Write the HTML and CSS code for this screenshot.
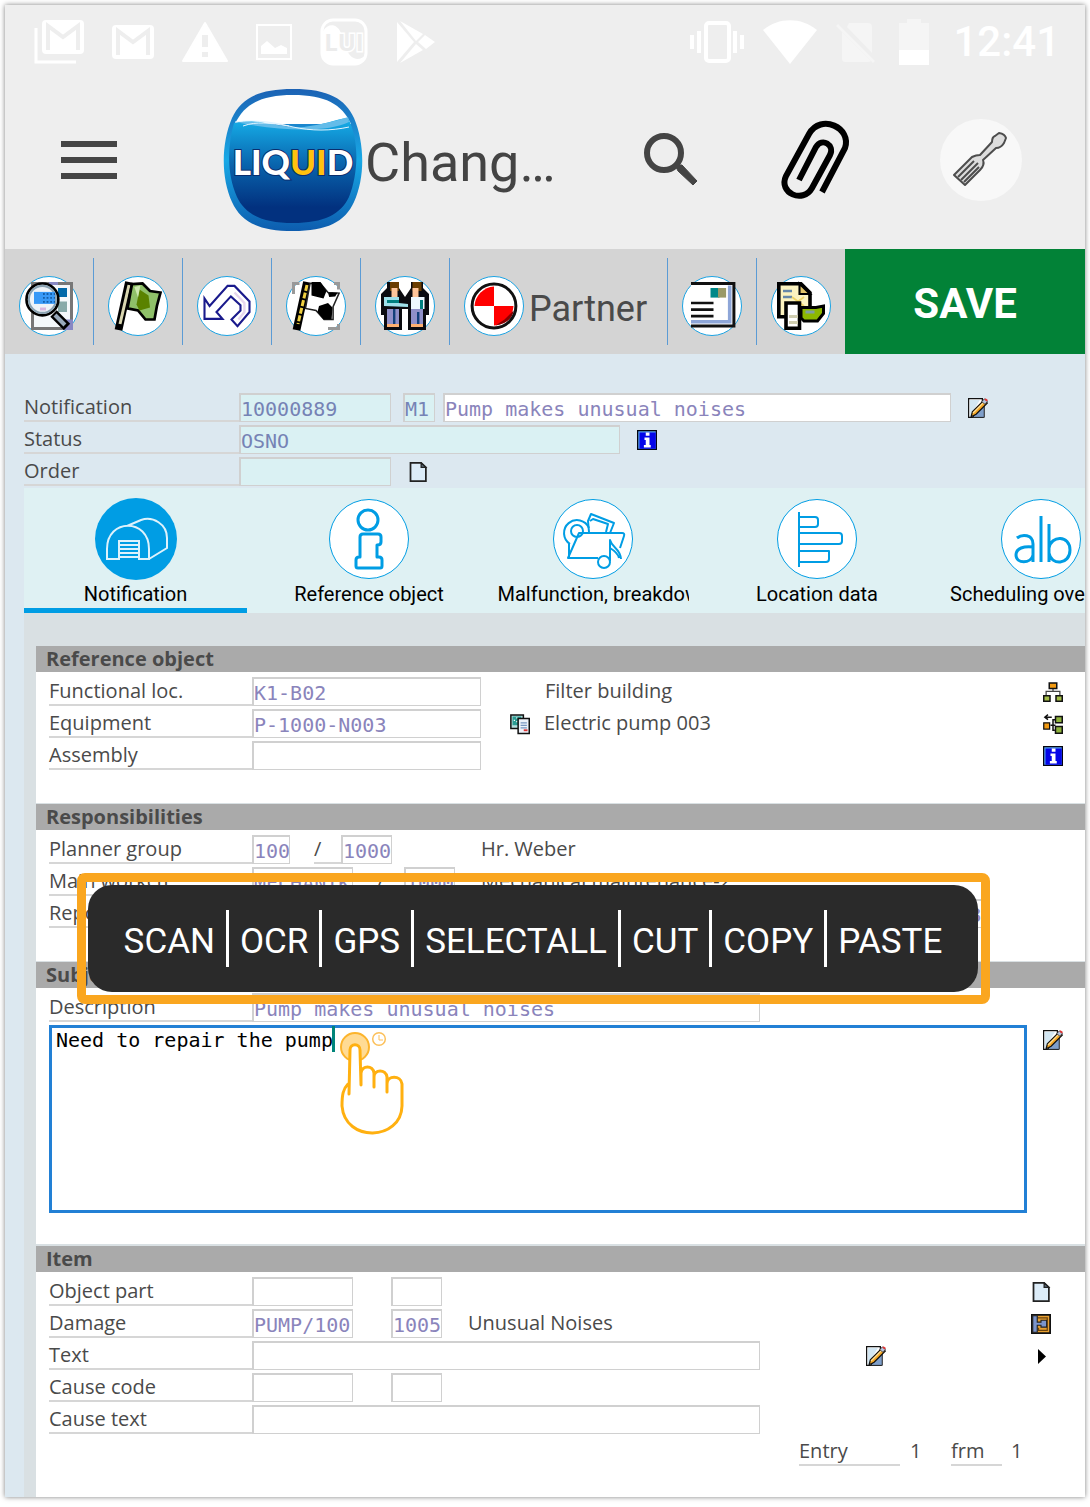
FILE: index.html
```html
<!DOCTYPE html>
<html lang="en">
<head>
<meta charset="utf-8">
<meta name="viewport" content="width=device-width, initial-scale=1">
<title>Change notification</title>
<link rel="stylesheet" href="styles.css">
</head>
<body>
<svg class="sprite" width="0" height="0" aria-hidden="true">
  <symbol id="i-edit" viewBox="0 0 16 16">
    <path d="M.5 .5h11v15h-11z" fill="#fff" stroke="#111"/>
    <path d="M1.500 1.500h8L5 9v5.500H1.500z" fill="#d3e7f3"/>
    <path d="M8 8l5-3v10.500H4z" fill="#7f9fca" stroke="#222" stroke-width=".8"/>
    <path d="M2.500 15l1-4 9-9 3 2-9 9z" fill="#f5a623" stroke="#111"/>
    <path d="M4 12l8.500-8.500" stroke="#ffe19a"/>
    <path d="M11 3l2-2.300 2.600 1.800L13.600 5z" fill="#b8c4de" stroke="#333" stroke-width=".6"/>
    <path d="M13.500.7l2 1.500" stroke="#d33" stroke-width="1.500"/>
  </symbol>
  <symbol id="i-info" viewBox="0 0 16 16">
    <path d="M0 0h16v16H0z" fill="#050510"/><path d="M1 1h14v14H1z" fill="#55a0f0"/><path d="M2 2h13v13H2z" fill="#0505e8"/>
    <path d="M7 2h3v2.500H7zM6 6h4v6h1v2H5.500v-2H7V8H6z" fill="#fff"/>
  </symbol>
  <symbol id="i-page" viewBox="0 0 16 16">
    <path d="M2 .7h8.500l3.800 3.600v11H2z" fill="#dcecf8" stroke="#222" stroke-width="1.400"/>
    <path d="M10.500 .7v3.600h3.800z" fill="#567" stroke="#222"/>
  </symbol>
</svg>

<div class="screen">
  <header class="top">
    <div class="status">
      <svg width="50" height="44" viewBox="0 0 50 44"><path d="M2 8v34h40" fill="none" stroke="#fff" stroke-width="3"/><rect x="8" width="42" height="34" rx="4" fill="#fff"/><path d="M14 30V6l15 11L44 6v24" fill="none" stroke="#eee" stroke-width="4"/></svg>
      <svg width="42" height="34" viewBox="0 0 42 34"><rect width="42" height="34" rx="4" fill="#fff"/><path d="M6 30V6l15 11L36 6v24" fill="none" stroke="#eee" stroke-width="4"/></svg>
      <svg width="46" height="42" viewBox="0 0 46 42"><path d="M23 2L1 40h44z" fill="#fff" stroke="#fff" stroke-width="2" stroke-linejoin="round"/><path d="M20 14h6v12h-6zM20 31h6v5h-6z" fill="#eee"/></svg>
      <svg width="36" height="36" viewBox="0 0 36 36"><path d="M1 1h34v34H1z" fill="none" stroke="#fff" stroke-width="2"/><path d="M5 30v-8l6-5 8 7 6-3 6 3v6z" fill="#fff"/></svg>
      <svg width="48" height="48" viewBox="0 0 48 48"><rect x="2" y="2" width="44" height="44" rx="11" fill="none" stroke="#fff" stroke-width="3"/><path d="M3 13c5-8 14-8 18 2 5 12 5 24 16 26 4 0 7-2 8-4v4c-2 4-5 5-8 5H12c-6 0-9-4-9-9z" fill="#fff"/><text x="24" y="33" text-anchor="middle" class="lui">LUI</text></svg>
      <svg width="40" height="44" viewBox="0 0 40 44"><path d="M1 2l17 20L1 42zM4 1l23 13-7 7zM4 43l16-19 7 6zM29 15l10 7-9 7-8-7z" fill="#fff"/></svg>
      <svg class="push" width="54" height="42" viewBox="0 0 54 42"><rect x="16" y="2" width="23" height="38" rx="3" fill="none" stroke="#fff" stroke-width="4"/><path d="M2 14v14M9 10v22M45 10v22M52 14v14" stroke="#fff" stroke-width="4"/></svg>
      <svg width="54" height="44" viewBox="0 0 54 44"><path d="M0 10C16-3 38-3 54 10L27 44z" fill="#fff"/></svg>
      <svg width="44" height="44" viewBox="0 0 44 44"><path d="M13 3h19q4 0 4 4v26L11 7zM6 12l29 29q-1 1-3 1H9q-3 0-3-3z" fill="#f5f5f5"/><path d="M1 5l37 37" stroke="#f5f5f5" stroke-width="3"/></svg>
      <svg width="30" height="46" viewBox="0 0 30 46"><path d="M0 4h8V0h14v4h8v27H0z" fill="#f5f5f5"/><path d="M0 31h30v15H0z" fill="#fff"/></svg>
      <time class="clock">12:41</time>
    </div>
    <div class="appbar">
      <button class="plain" aria-label="Menu"><svg width="56" height="40" viewBox="0 0 56 40"><path d="M0 4h56M0 20h56M0 36h56" stroke="#444" stroke-width="6"/></svg></button>
      <svg class="logo" width="140" height="144" viewBox="0 0 140 144" role="img" aria-label="Liquid UI">
        <defs>
          <linearGradient id="rim" x1="0" y1="0" x2="0" y2="1"><stop offset="0" stop-color="#1c62b4"/><stop offset=".5" stop-color="#18a9e6"/><stop offset="1" stop-color="#0d5cae"/></linearGradient>
          <linearGradient id="sea" x1="0" y1="0" x2="0" y2="1"><stop offset="0" stop-color="#16b0ea"/><stop offset=".45" stop-color="#0963ac"/><stop offset=".85" stop-color="#02317f"/></linearGradient>
        </defs>
        <path d="M70 1c36 0 52 10 61 29 11 26 11 60 0 84-9 20-27 29-61 29s-52-9-61-29c-11-24-11-58 0-84C18 11 34 1 70 1z" fill="url(#rim)"/>
        <path d="M12 36C21 16 38 7 70 7s49 9 58 29z" fill="#fff"/>
        <path d="M11 35c30-7 40 8 70 4 20-2 32-8 44-9 12 24 10 56 1 79-8 17-25 26-56 26s-48-9-56-26C4 86 4 60 11 35z" fill="url(#sea)"/>
        <path d="M12 35c28-5 52 8 75 3 18-3 28-6 38-9l1 5c-20 10-66 10-114 0z" fill="#64bce9"/>
        <path d="M12 34c22-3 42 1 58 5 18 4 38 4 56 0M20 38c14-5 26-3 46 0" fill="none" stroke="#e3f5ff" stroke-width="1"/>
        <text x="70" y="87" text-anchor="middle" class="logo-text">LIQ<tspan fill="#ffc20e">UI</tspan>D</text>
      </svg>
      <h1 class="title">Chang…</h1>
      <div class="actions">
        <button class="plain" aria-label="Search"><svg width="54" height="54" viewBox="0 0 54 54"><circle cx="20" cy="20" r="17" fill="none" stroke="#444" stroke-width="6"/><path d="M32 34l2-2h4l15 16-4 4-15-14z" fill="#444" stroke="#444"/></svg></button>
        <button class="plain" aria-label="Attachments"><svg width="68" height="80" viewBox="4 0 68 80"><path d="M18 60L35 27c6-10 19-2 14 8L31 68C22 84-3 73 5 56L28 14C40-7 71 8 64 28L41 72" fill="none" stroke="#000" stroke-width="6"/></svg></button>
        <button class="plain" aria-label="Tools"><svg width="82" height="82" viewBox="0 0 82 82"><circle cx="41" cy="41" r="41" fill="#f8f8f8"/><g fill="#ddd" stroke="#4d4d4d" stroke-width="2" stroke-linejoin="round"><path d="M14 56l18-18q4-2 8-2l12-13q0-5 3-6l4-3q6 1 7 5l-2 5q-3 5-8 5L43 41q2 5-3 10L25 66z"/><path d="M18 58l16-16M21 61l17-17M24 63l15-15" fill="none"/></g></svg></button>
      </div>
    </div>
  </header>

  <div class="toolbar">
    <button class="tool" aria-label="Display"><span class="disc"><svg width="48" height="48" viewBox="0 0 16 16">
      <path d="M2.500 .5h13v15h-13z" fill="#f4f8fb" stroke="#777"/><path d="M11 2h3v3h-3z" fill="#0069aa"/><path d="M11 6.500h3v3.500h-3z" fill="#8aa"/><path d="M12.500 12.500H16V16h-3.500zM8 0h3v1H8z" fill="#8888c4"/>
      <circle cx="5.800" cy="5.800" r="5.300" fill="#eef3f8" stroke="#000" stroke-width=".9"/><circle cx="5.800" cy="5.800" r="4.500" fill="none" stroke="#8ba3b3" stroke-width=".7"/><path d="M3 3.300h7v4H3z" fill="#3799f7"/><path d="M6 4h4M6 5.300h4M6 6.600h4" stroke="#145ea8" stroke-width=".6" stroke-dasharray=".6 .6"/><path d="M5 9h2" stroke="#d9b8e0" stroke-width="1"/><path d="M9.500 10.500l4.500 4.500" stroke="#000" stroke-width="3"/><path d="M10 11l3.300 3.300" stroke="#9ab" stroke-width="1.400"/></svg></span></button>
    <button class="tool" aria-label="Release"><span class="disc"><svg width="48" height="48" viewBox="0 0 16 16">
      <path d="M5 0L1.500 16" stroke="#000" stroke-width="2.600"/><path d="M5 1L2 14" stroke="#d9d6b0" stroke-width="1"/><path d="M6 .7l3.500-.2L12 3l3.500.5-1.200 4.500-.8 4.500h-3L8 9.500 4.500 8.800z" fill="#8fc069" stroke="#000" stroke-width=".9"/><path d="M8.500 2.500l3 2 .5 4-3.500 1-1-2z" fill="#5a8200"/><path d="M6.800 1.700l2-.5-.8 4z" fill="#cde8b0"/></svg></span></button>
    <button class="tool" aria-label="Undo"><span class="disc"><svg width="48" height="48" viewBox="0 0 16 16">
      <path d="M8.200 1.300h2.300l5 5.200V10l-4 4.700-2-2.200 3-3V7.700L9.300 4.800 4.500 10l2 2.300H.5V5.500L2.200 8z" fill="#fff" stroke="#1a1a8c" stroke-width=".7"/><path d="M10.500 3.500l3.300 3.500v3l-2 2.500" fill="none" stroke="#e6d6ee" stroke-width=".8"/></svg></span></button>
    <button class="tool" aria-label="Complete"><span class="disc"><svg width="48" height="48" viewBox="0 0 16 16">
      <path d="M.5 4V.5h2M14 .5h1.500v2M12 15.500h3.500V14" fill="none" stroke="#999"/><path d="M5 0L1.500 16" stroke="#000" stroke-width="2.600"/><path d="M5 1L2 14" stroke="#f0d040" stroke-width="1" stroke-dasharray="2 .6"/><path d="M6 .5h3.500l2.500 3 3.700.2-2 4.500v4.300h-3L8 9.500l-3.500-.7z" fill="#fff" stroke="#222" stroke-width=".5"/><path d="M6.500 0h3l2 3-1 2.500L6.500 4.500zM9 8l3-1 1.500 1.500-.3 4h-2.700L8.500 10zM12 3.600h3.200l-.8 1.200-2 .2z" fill="#000"/></svg></span></button>
    <button class="tool" aria-label="Partners"><span class="disc"><svg width="48" height="48" viewBox="0 0 16 16">
      <path d="M0 4l2-2V0h4v2l2 3 2-3V0h4v2l2 2v7h-1v5H9V9H7v7H1v-5H0z" fill="#0b0b10"/><path d="M3 0h3v3H3zM10.500 0h3v3h-3z" fill="#6a3d00"/><path d="M3.500 2h2v3h-2zM10.500 2h2v3h-2z" fill="#ffc59a"/><path d="M1 5h5v2l3 .3v1L1 8z" fill="#9fe0ea"/><path d="M2 6h4v1H2z" fill="#008080"/><path d="M10 5h4.500v4H10z" fill="#eef8ff"/><path d="M13 6h1v3h-1z" fill="#008080"/><path d="M2 9h4v6H2zM10 9h4v6h-4z" fill="#8f8fc8"/><path d="M4 9h.8v6H4zM12 10h.8v5H12z" fill="#123f7a"/><path d="M2 14.500h4M10 14.500h4" stroke="#ffb070"/></svg></span></button>
    <button class="tool tool-wide"><span class="disc"><svg width="48" height="48" viewBox="0 0 16 16">
      <circle cx="8" cy="8" r="7.400" fill="#fff"/><path d="M8 1.500V8H1.500A7 7 0 0 1 8 1.500z" fill="#f00"/><path d="M8 14.500V8h6.500A7 7 0 0 1 8 14.500z" fill="#f00"/><path d="M8.500 14.500c4-.5 6-3 6-5l-3 3z" fill="#800"/><circle cx="8" cy="8" r="7.300" fill="none" stroke="#111"/></svg></span><span class="tool-text">Partner</span></button>
    <button class="tool" aria-label="Short text"><span class="disc"><svg width="48" height="48" viewBox="0 0 16 16">
      <path d="M1 .5h14.300v14.200H1" fill="#fff" stroke="#111"/><path d="M1 12.700h12.300V1.200h1.200v12.600H1z" fill="#8ea6d8"/><path d="M7.500 2h3v3.200h-3z" fill="#088"/><path d="M10 2h2.700v3.200H10z" fill="#999966"/><path d="M1 7h7.500M1 9.200h7.500M1 11.400h7.500" stroke="#111" stroke-width=".9"/></svg></span></button>
    <button class="tool" aria-label="Copy to document"><span class="disc"><svg width="48" height="48" viewBox="0 0 16 16">
      <path d="M.6 .6H8l3 3v8H.6z" fill="#fcf3c0" stroke="#000" stroke-width="1.200"/><path d="M7.500 .6v3.400H11z" fill="#e3c66a" stroke="#000" stroke-width=".7"/><path d="M2 3h3M2 5h3" stroke="#68a" stroke-width=".9"/><path d="M5 5l4 3M9 5L5 8" stroke="#eed568" stroke-width=".6"/><path d="M3 7h4.500v8.400H3z" fill="#fff" stroke="#000" stroke-width="1.200"/><path d="M4 11.500h3M4 13.500h3" stroke="#cfcdb0"/><path d="M8 8.500h5l2.500-.5v2.500l-2 2.500H9L8 12z" fill="#8cb800" stroke="#000"/><path d="M9.500 10h3" stroke="#7fa0a0"/></svg></span></button>
    <button class="save">SAVE</button>
  </div>

  <main>
    <div class="rows head">
      <div class="row">
        <label class="lbl lbl-head" for="notif">Notification</label>
        <input id="notif" class="in w-152 ro" value="10000889" readonly>
        <input class="in w-32 ro ml-12" value="M1" aria-label="Type" readonly>
        <input class="in grow ml-8" value="Pump makes unusual noises" aria-label="Short text">
        <button class="plain ic ml-17 edit-end" aria-label="Edit long text"><svg width="20" height="20"><use href="#i-edit"/></svg></button>
      </div>
      <div class="row">
        <label class="lbl lbl-head" for="stat">Status</label>
        <input id="stat" class="in w-381 ro" value="OSNO" readonly>
        <button class="plain ic ml-17" aria-label="Status info"><svg width="20" height="20"><use href="#i-info"/></svg></button>
      </div>
      <div class="row">
        <label class="lbl lbl-head" for="ord">Order</label>
        <input id="ord" class="in w-152 ro" readonly>
        <button class="plain ic ml-17" aria-label="Create order"><svg width="20" height="20"><use href="#i-page"/></svg></button>
      </div>
    </div>

    <div class="tabs" role="tablist">
      <button class="tab active" role="tab" aria-selected="true"><svg width="82" height="82" viewBox="0 0 82 82"><circle cx="41" cy="41" r="41" fill="#009de4"/><g fill="none" stroke="#def2fc" stroke-width="2"><path d="M12 61V51c0-31 42-31 42 0v10H44V43H24v18zM32 28l14-6c12-4 26 4 26 18v10L54 61"/><path d="M24 47h20M24 51h20M24 55h20M24 59h20"/></g></svg><span>Notification</span></button>
      <button class="tab" role="tab"><svg width="82" height="82" viewBox="0 0 82 82"><circle class="ring" cx="41" cy="41" r="39.500"/><g class="line3"><circle cx="40" cy="22" r="10"/><path d="M35 36h15q3 0 3 3v5q0 3-4 3v12h2q3 0 3 3v6q0 2-2 2H30q-2 0-2-2v-6q0-3 3-3h1V39q0-3 3-3z"/></g></svg><span>Reference object</span></button>
      <button class="tab" role="tab"><svg width="82" height="82" viewBox="0 0 82 82"><circle class="ring" cx="41" cy="41" r="39.500"/><g class="line2"><path d="M18 46a13 13 0 1 1 19-16M17 46v13"/><circle cx="25" cy="33" r="6"/><path d="M37 34l-1-11 3-7 23 9-4 10M38 23l3-2 15 5-2 8"/><path d="M46 60H16l11-25h43q3 0 2 3l-4 12"/><circle cx="52" cy="64" r="6"/><path d="M58 63V42c2 8 10 8 11 19M58 50c5 3 8 6 9 10"/></g></svg><span>Malfunction, breakdown</span></button>
      <button class="tab" role="tab"><svg width="82" height="82" viewBox="0 0 82 82"><circle class="ring" cx="41" cy="41" r="39.500"/><path class="line2" d="M23 14v55M23 19h16q3 0 3 3v4q0 3-3 3H23M23 35h40q3 0 3 3v5q0 3-3 3H23M23 53h30v8q0 3-3 3H23"/></svg><span>Location data</span></button>
      <button class="tab" role="tab"><svg width="82" height="82" viewBox="0 0 82 82"><circle class="ring" cx="41" cy="41" r="39.500"/><path class="line3" d="M17 40c5-4 16-4 16 6v18M33 49c-9-1-17 1-17 8 0 9 15 9 17 0M41 18v46M49 26v38M49 50c2-13 21-13 21 2s-19 16-21 3"/></svg><span>Scheduling overview</span></button>
    </div>

    <div class="content">
      <section class="card">
        <h2>Reference object</h2>
        <div class="rows">
          <div class="row"><label class="lbl" for="floc">Functional loc.</label><input id="floc" class="in w-229" value="K1-B02"><span class="txt ml-64">Filter building</span>
            <button class="plain ic end" aria-label="Structure"><svg width="20" height="20" viewBox="0 0 16 16"><path d="M8 4v4M2.500 11V7.500h11V11" fill="none" stroke="#444"/><path d="M5 .8h6v4.400H5z" fill="#f29a12" stroke="#111" stroke-width="1.200"/><path d="M.6 11h5v4.300h-5zM10.400 11h5v4.300h-5z" fill="#a4bd48" stroke="#111" stroke-width="1.200"/></svg></button></div>
          <div class="row"><label class="lbl" for="equi">Equipment</label><input id="equi" class="in w-229" value="P-1000-N003">
            <button class="plain ic ml-29" aria-label="Copy object"><svg width="20" height="20" viewBox="0 0 16 16"><path d="M.7 .8h10v10.700h-10z" fill="#b9e0e0" stroke="#111" stroke-width="1.200"/><path d="M2 2h7v7H2z" fill="#2b9c93"/><path d="M3 5h1M5 3h1M5 6h1" stroke="#fff"/><path d="M6.500 3.500h8.900v12H6.500z" fill="#eef2fa" stroke="#111" stroke-width="1.200"/><path d="M8.500 7h5M8.500 9h5M8.500 11h5" stroke="#7896c0"/><path d="M11 13h3" stroke="#d33" stroke-width="1.500"/></svg></button>
            <span class="txt ml-14">Electric pump 003</span>
            <button class="plain ic end" aria-label="Hierarchy"><svg width="20" height="20" viewBox="0 0 16 16"><path d="M6 9h4M9.500 13H8V4.500h2M1.500 2.500H7M4 .5L1.500 2.500 4 4.500" fill="none" stroke="#111" stroke-width="1.200"/><path d="M.6 7h4.700v5H.6z" fill="#f29a12" stroke="#111"/><path d="M10 2h5.400v5H10zM10 10h5.400v5.400H10z" fill="#8fb33c" stroke="#111" stroke-width="1.200"/></svg></button></div>
          <div class="row"><label class="lbl" for="assy">Assembly</label><input id="assy" class="in w-229"><button class="plain ic end" aria-label="Object info"><svg width="20" height="20"><use href="#i-info"/></svg></button></div>
        </div>
      </section>

      <section class="card">
        <h2>Responsibilities</h2>
        <div class="rows">
          <div class="row"><label class="lbl" for="plan">Planner group</label><input id="plan" class="in w-38" value="100"><span class="lbl slash">/</span><input class="in w-51" value="1000" aria-label="Planning plant"><span class="txt ml-89">Hr. Weber</span></div>
          <div class="row"><label class="lbl" for="work">Main workctr</label><input id="work" class="in w-101" value="MECHANIK"><span class="lbl slash">/</span><input class="in w-51" value="1000" aria-label="Plant"><span class="txt ml-26">Mechanical maintenance-2</span></div>
          <div class="row reported"><label class="lbl" for="rep">Reported by</label><input id="rep" class="in w-152"><input class="in w-101 end" value="12/20/18" aria-label="Date"></div>
        </div>
      </section>

      <section class="card subject">
        <h2>Subject</h2>
        <div class="rows">
          <div class="row"><label class="lbl" for="desc">Description</label><input id="desc" class="in w-508" value="Pump makes unusual noises"></div>
          <div class="note">
            <textarea aria-label="Long text">Need to repair the pump</textarea>
            <span class="caret"></span>
            <svg class="hand" width="66" height="104" viewBox="0 0 66 104"><circle cx="15" cy="16" r="14" fill="#ffdb94" stroke="#fcb42c" stroke-width="2"/><circle cx="39" cy="8" r="6.300" fill="#fff" stroke="#fcc05a" stroke-width="1.500"/><path d="M39 4v5h4" fill="none" stroke="#fcc05a"/><path d="M9 63L10 19c0-7 10-7 10 0l1 35V42c1-8 12-8 13 0v14-10c0-8 12-8 13 0v15-8c0-9 14-9 15 0v22c-1 35-57 37-60 0 0-11 1-17 6-22" fill="#fff" stroke="#ffb010" stroke-width="3" stroke-linejoin="round" stroke-linecap="round"/></svg>
            <button class="plain ic" aria-label="Edit text"><svg width="20" height="20"><use href="#i-edit"/></svg></button>
          </div>
        </div>
        <div class="popup" role="toolbar" aria-label="Text actions">
          <div class="popup-bar"><button>SCAN</button><button>OCR</button><button>GPS</button><button>SELECTALL</button><button>CUT</button><button>COPY</button><button>PASTE</button></div>
        </div>
      </section>

      <section class="card item">
        <h2>Item</h2>
        <div class="rows">
          <div class="row"><label class="lbl" for="part">Object part</label><input id="part" class="in w-101"><input class="in w-51 ml-38" aria-label="Part code"><button class="plain ic end" aria-label="New item"><svg width="20" height="20"><use href="#i-page"/></svg></button></div>
          <div class="row"><label class="lbl" for="dmg">Damage</label><input id="dmg" class="in w-101" value="PUMP/100"><input class="in w-51 ml-38" value="1005" aria-label="Damage code"><span class="txt ml-26">Unusual Noises</span><button class="plain ic end" aria-label="Assign"><svg width="20" height="20" viewBox="0 0 16 16"><path d="M.7 .7h14.600v14.600H.7z" fill="#e8a030" stroke="#111" stroke-width="1.400"/><path d="M5 3h8v10H6v-2" fill="none" stroke="#6b430c"/><path d="M1.400 1.400H5V6.500h3V5h4.500v5.500H8V9H5v5.600H1.400z" fill="#7b95cc" stroke="#222" stroke-width=".9"/></svg></button></div>
          <div class="row"><label class="lbl" for="text">Text</label><input id="text" class="in w-508"><button class="plain ic ml-106" aria-label="Edit item text"><svg width="20" height="20"><use href="#i-edit"/></svg></button><button class="plain ic end" aria-label="Next"><svg width="20" height="20" viewBox="0 0 20 20"><path d="M7 3v15l8-7.500z" fill="#000"/></svg></button></div>
          <div class="row"><label class="lbl" for="cc">Cause code</label><input id="cc" class="in w-101"><input class="in w-51 ml-38" aria-label="Cause group"></div>
          <div class="row"><label class="lbl" for="ct">Cause text</label><input id="ct" class="in w-508"></div>
          <div class="row entry"><span class="lbl w-101">Entry</span><span class="txt num">1</span><span class="lbl w-51">frm</span><span class="txt num-last">1</span></div>
        </div>
      </section>
    </div>
  </main>
</div>
</body>
</html>
```
FILE: styles.css
```css
* { box-sizing: border-box; }

body {
  margin: 0;
  background: #fff;
  color: #4a4a4a;
  font: 20px/27px "Open Sans", "Noto Sans", sans-serif;
}

button, input, textarea { margin: 0; font: inherit; color: inherit; border-radius: 0; }
button { padding: 0; border: 0; background: none; cursor: pointer; }
svg { display: block; flex: none; overflow: visible; }
.sprite { position: absolute; }

.screen {
  display: flex;
  flex-direction: column;
  min-height: calc(100vh - 15px);
  margin: 5px 5px 10px;
  background: #dce8f0;
  box-shadow: 0 0 5px rgba(0, 0, 0, .5);
  overflow: hidden;
}

/* Device status bar and application bar */
.top { height: 244px; background: #eee; }
.status {
  display: flex;
  align-items: center;
  gap: 28px;
  height: 74px;
  padding: 0 25px 0 29px;
}
.push { margin-left: auto; }
.status .push ~ svg { margin-left: -9px; }
.lui { font: 700 24px "Open Sans", sans-serif; fill: #ececec; stroke: #fff; stroke-width: 3px; paint-order: stroke; }
.clock { margin-left: -4px; font: 500 42px/44px Roboto, sans-serif; color: #fff; }

.appbar {
  display: flex;
  align-items: center;
  height: 162px;
  padding: 0 63px 0 56px;
}
.logo { margin-left: 106px; }
.logo-text { font: 900 35px Lato, sans-serif; fill: #fff; stroke: #0a2d6e; stroke-width: 2px; paint-order: stroke; }
.title { margin: 6px 0 0 2px; font: 400 54px/64px Roboto, sans-serif; color: #444; }
.actions { display: flex; align-items: center; gap: 87px; margin-left: auto; }

/* Action toolbar */
.toolbar { display: flex; align-items: center; height: 105px; background: #d4d4d4; }
.tool {
  display: flex;
  align-items: center;
  gap: 5px;
  height: 87px;
  padding: 9px 14px 0;
  border-right: 1px solid #5b9bd5;
  font: 400 36px/42px Roboto, sans-serif;
  color: #4a4a4a;
}
.tool:nth-child(8) { border-right: 0; }
.tool-wide { padding-right: 20px; }
.tool-text { padding-top: 5px; }
.disc {
  display: grid;
  place-items: center;
  width: 60px;
  height: 60px;
  border: 1px solid #1ba3e3;
  border-radius: 50%;
  background: #fff;
}
.save {
  flex: 1;
  align-self: stretch;
  padding-top: 4px;
  background: #028237;
  font: 700 42px/48px Roboto, sans-serif;
  color: #fff;
}

/* Form rows */
.rows { display: grid; gap: 3px; }
.head { padding: 39px 0 2px 19px; }
.row { display: flex; height: 29px; }
.lbl { flex: none; width: 203px; border-bottom: 2px solid #d6d6d6; }
.lbl-head { width: 215px; }
.txt { white-space: nowrap; }
.in {
  flex: none;
  min-width: 0;
  height: 29px;
  padding: 2px 0 0;
  border: 2px solid #d0d0d0;
  border-width: 2px 1px 1px 2px;
  background: #fff;
  font: 20px/24px "DejaVu Sans Mono", monospace;
  color: #8a84bb;
}
.ro { background: #daf1f3; color: #7683b5; }
.grow { flex: 1; }
.w-32 { width: 32px; }
.w-38 { width: 38px; }
.w-51 { width: 51px; }
.w-101 { width: 101px; }
.w-152 { width: 152px; }
.w-229 { width: 229px; }
.w-381 { width: 381px; }
.w-508 { width: 508px; }
.ml-8 { margin-left: 8px; }
.ml-12 { margin-left: 12px; }
.ml-14 { margin-left: 14px; }
.ml-17 { margin-left: 17px; }
.ml-26 { margin-left: 26px; }
.ml-29 { margin-left: 29px; }
.ml-38 { margin-left: 38px; }
.ml-64 { margin-left: 64px; }
.ml-89 { margin-left: 89px; }
.ml-106 { margin-left: 106px; }
.ic { flex: none; align-self: center; }
.end { margin-left: auto; }
.edit-end { margin-right: 97px; }
.slash { width: 27px; margin-left: 24px; }

/* Tabs */
.tabs { display: flex; height: 125px; margin-left: 19px; background: #dff1f3; overflow: hidden; }
.tab {
  display: flex;
  flex: 0 0 224px;
  flex-direction: column;
  align-items: center;
  padding: 10px 16px 0;
  border-bottom: 5px solid transparent;
  font: 400 20px/28px Roboto, sans-serif;
  color: #000;
}
.tab span { max-width: 191px; overflow: hidden; white-space: nowrap; }
.active { flex-basis: 223px; margin-right: 10px; border-bottom-color: #009de4; }
.ring { fill: #fff; stroke: #009de4; stroke-width: 1px; }
.line2, .line3 { fill: none; stroke: #009de4; stroke-width: 2px; stroke-linejoin: round; }
.line3 { stroke-width: 3px; }

/* Sections */
main { display: flex; flex: 1; flex-direction: column; }
.content {
  display: flex;
  flex: 1;
  flex-direction: column;
  gap: 1px;
  margin-left: 19px;
  padding: 33px 0 0 12px;
  background: #d9e0e3;
}
.card { background: #fff; padding-bottom: 33px; }
.card h2 { height: 26px; margin: 0; padding-left: 10px; background: #aaa; font-size: 20px; line-height: 26px; }
.card .rows { padding: 5px 22px 0 13px; }
.reported { padding-right: 79px; }

.subject { position: relative; padding-bottom: 31px; }
.note { position: relative; display: flex; align-items: flex-start; justify-content: space-between; gap: 16px; }
.note textarea {
  flex: 1;
  height: 188px;
  padding: 0 4px;
  border: 3px solid #2280d5;
  outline: 0;
  resize: none;
  background: #fff;
  font: 20px/24px "DejaVu Sans Mono", monospace;
  color: #000;
}
.note .ic { align-self: flex-start; margin-top: 5px; }
.caret { position: absolute; left: 283px; top: 1px; width: 3px; height: 26px; background: #00857a; }
.hand { position: absolute; left: 291px; top: 6px; }

.popup {
  position: absolute;
  top: -89px;
  left: 41px;
  right: 95px;
  height: 131px;
  padding: 3px 3px 3px 2px;
  border: 9px solid #faa61f;
  border-radius: 8px;
}
.popup-bar {
  display: flex;
  align-items: center;
  justify-content: center;
  height: 107px;
  border-radius: 24px;
  background: #2a2a2a;
}
.popup button {
  height: 57px;
  padding: 7px 11px 0;
  border-right: 3px solid #fff;
  font: 400 35px/42px Roboto, sans-serif;
  color: #fff;
}
.popup button:last-child { border-right: 0; }

.item { flex: 1; margin-top: 1px; padding-bottom: 0; }
.item .rows { padding-right: 34px; }
.entry { justify-content: flex-end; padding-right: 29px; }
.num { width: 51px; padding-left: 10px; }
.num-last { width: 20px; padding-left: 9px; }
```
